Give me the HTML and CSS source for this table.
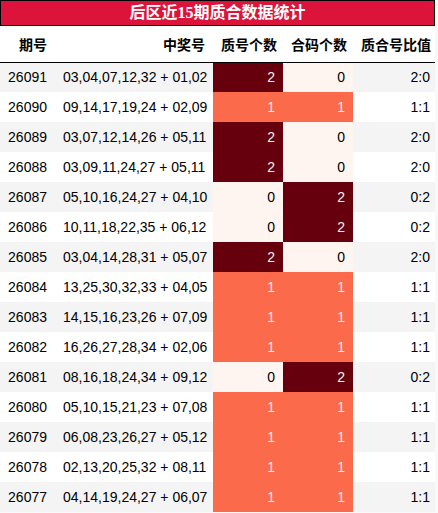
FILE: index.html
```html
<!DOCTYPE html>
<html lang="zh">
<head>
<meta charset="utf-8">
<title>后区近15期质合数据统计</title>
<link rel="stylesheet" href="styles.css">
</head>
<body>
<div class="sheet">
<div class="title">后区近15期质合数据统计</div>
<table class="stats">
<colgroup>
<col class="c1"><col class="c2"><col class="c3"><col class="c4"><col class="c5">
</colgroup>
<thead>
<tr><th>期号</th><th>中奖号</th><th>质号个数</th><th>合码个数</th><th class="last">质合号比值</th></tr>
</thead>
<tbody>
<tr class="odd"><td>26091</td><td>03,04,07,12,32 + 01,02</td><td class="v2">2</td><td class="v0">0</td><td class="last">2:0</td></tr>
<tr><td>26090</td><td>09,14,17,19,24 + 02,09</td><td class="v1">1</td><td class="v1">1</td><td class="last">1:1</td></tr>
<tr class="odd"><td>26089</td><td>03,07,12,14,26 + 05,11</td><td class="v2">2</td><td class="v0">0</td><td class="last">2:0</td></tr>
<tr><td>26088</td><td>03,09,11,24,27 + 05,11</td><td class="v2">2</td><td class="v0">0</td><td class="last">2:0</td></tr>
<tr class="odd"><td>26087</td><td>05,10,16,24,27 + 04,10</td><td class="v0">0</td><td class="v2">2</td><td class="last">0:2</td></tr>
<tr><td>26086</td><td>10,11,18,22,35 + 06,12</td><td class="v0">0</td><td class="v2">2</td><td class="last">0:2</td></tr>
<tr class="odd"><td>26085</td><td>03,04,14,28,31 + 05,07</td><td class="v2">2</td><td class="v0">0</td><td class="last">2:0</td></tr>
<tr><td>26084</td><td>13,25,30,32,33 + 04,05</td><td class="v1">1</td><td class="v1">1</td><td class="last">1:1</td></tr>
<tr class="odd"><td>26083</td><td>14,15,16,23,26 + 07,09</td><td class="v1">1</td><td class="v1">1</td><td class="last">1:1</td></tr>
<tr><td>26082</td><td>16,26,27,28,34 + 02,06</td><td class="v1">1</td><td class="v1">1</td><td class="last">1:1</td></tr>
<tr class="odd"><td>26081</td><td>08,16,18,24,34 + 09,12</td><td class="v0">0</td><td class="v2">2</td><td class="last">0:2</td></tr>
<tr><td>26080</td><td>05,10,15,21,23 + 07,08</td><td class="v1">1</td><td class="v1">1</td><td class="last">1:1</td></tr>
<tr class="odd"><td>26079</td><td>06,08,23,26,27 + 05,12</td><td class="v1">1</td><td class="v1">1</td><td class="last">1:1</td></tr>
<tr><td>26078</td><td>02,13,20,25,32 + 08,11</td><td class="v1">1</td><td class="v1">1</td><td class="last">1:1</td></tr>
<tr class="odd"><td>26077</td><td>04,14,19,24,27 + 06,07</td><td class="v1">1</td><td class="v1">1</td><td class="last">1:1</td></tr>
</tbody>
</table>
</div>
</body>
</html>
```
FILE: styles.css
```css
html, body {
  margin: 0;
  padding: 0;
  background: #f9f9f9;
}
body {
  font-family: "Liberation Sans", "Noto Sans CJK SC", sans-serif;
  font-size: 14px;
  color: #000000;
}
.sheet {
  width: 435px;
  background: #ffffff;
}
.title {
  box-sizing: border-box;
  height: 26px;
  border: 1px solid #000000;
  background: #dc143c;
  color: #ffffff;
  font-family: "Liberation Serif", "Noto Sans CJK SC", serif;
  font-weight: bold;
  font-size: 16px;
  line-height: 24px;
  text-align: center;
}
.stats {
  width: 435px;
  border-collapse: collapse;
  border-spacing: 0;
  table-layout: fixed;
}
.c1 { width: 55px; }
.c2 { width: 158px; }
.c3 { width: 70px; }
.c4 { width: 70px; }
.c5 { width: 82px; }
.stats th {
  height: 36px;
  padding: 1px 8px 0 8px;
  text-align: right;
  font-weight: bold;
  font-size: 14px;
  border-bottom: 1px solid #000000;
  box-sizing: border-box;
  white-space: nowrap;
}
.stats td {
  height: 30px;
  padding: 0 8px;
  text-align: right;
  white-space: nowrap;
  box-sizing: border-box;
}
.stats th.last,
.stats td.last {
  padding-right: 5px;
}
.stats tr.odd td {
  background: #f4f4f4;
}
.stats tr td.v0 {
  background: #fff5f0;
  color: #000000;
}
.stats tr td.v1 {
  background: #fb6a4a;
  color: #f1f1f1;
}
.stats tr td.v2 {
  background: #67000d;
  color: #f1f1f1;
}
```
